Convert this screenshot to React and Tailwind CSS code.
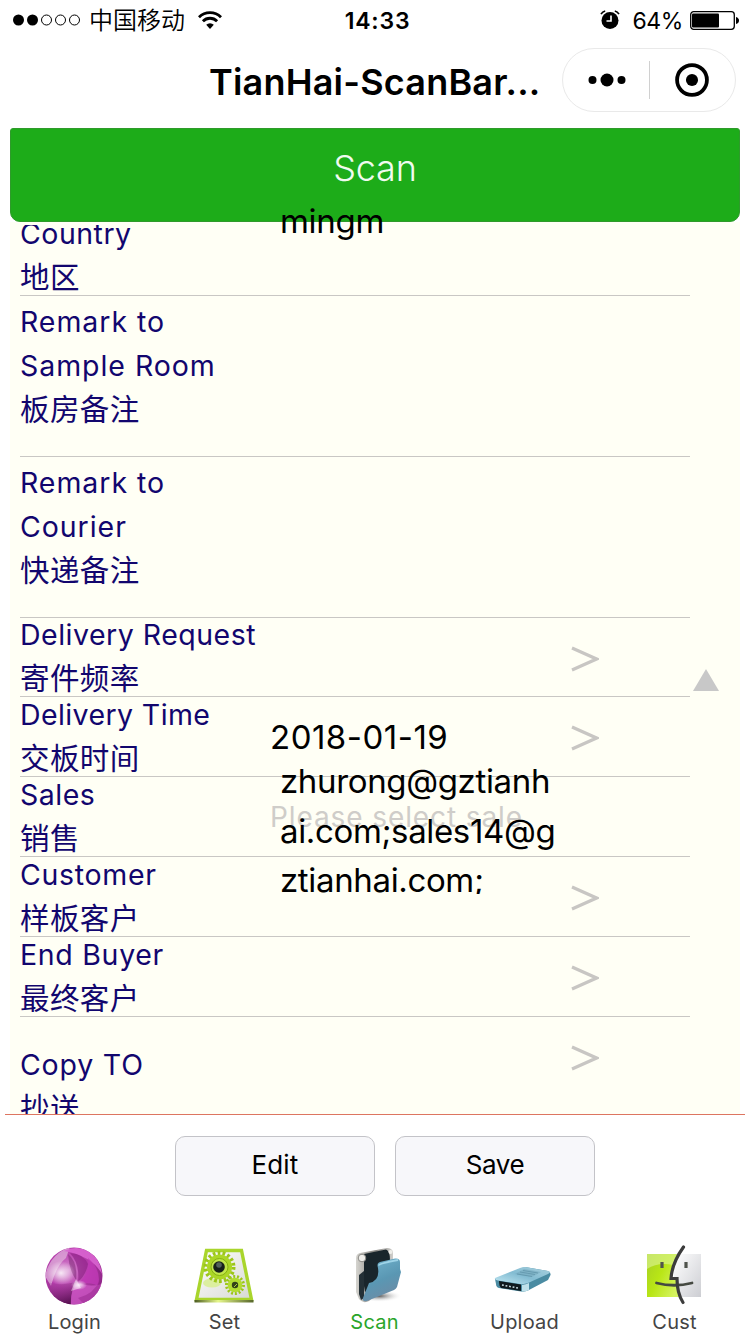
import React, { useState } from "react";

const rows = [
    { lines: ["Country", "地区"], box: "h-20 items-center" },
    { lines: ["Remark to", "Sample Room", "板房备注"], box: "h-[161px] items-start pt-1 tracking-[0.95px]" },
    { lines: ["Remark to", "Courier", "快递备注"], box: "h-[161px] items-start pt-1 tracking-[0.95px]" },
    { lines: ["Delivery Request", "寄件频率"], box: "h-[79px] items-center tracking-[0.5px]", arrow: true },
    { lines: ["Delivery Time", "交板时间"], box: "h-20 items-center tracking-[0.4px]", arrow: true, value: "2018-01-19" },
    { lines: ["Sales", "销售"], box: "h-20 items-center tracking-[0.5px]", placeholder: "Please select sale" },
    { lines: ["Customer", "样板客户"], box: "h-20 items-center tracking-[0.7px]", arrow: true },
    { lines: ["End Buyer", "最终客户"], box: "h-20 items-center tracking-[0.7px]", arrow: true },
    { lines: ["Copy TO", "抄送"], box: "h-[120px] items-start pt-[26px] tracking-[0.8px]", arrow: true },
];

const StatusBar = () => (
    <div className="flex h-10 shrink-0 items-center justify-between pl-[13px] pr-[11px]">
        <div className="flex w-[300px] items-center">
            <svg width="70" height="14" viewBox="0 0 70 14">
                <circle cx="5.5" cy="7" r="5.5" />
                <circle cx="19.5" cy="7" r="5.5" />
                <circle cx="33.5" cy="7" r="5" fill="none" stroke="#000" />
                <circle cx="47.5" cy="7" r="5" fill="none" stroke="#000" />
                <circle cx="61.5" cy="7" r="5" fill="none" stroke="#000" />
            </svg>
            <span className="ml-[6px] mt-[2px] text-[24px] leading-10 font-[350]">中国移动</span>
            <svg className="ml-[13px]" width="24" height="18" viewBox="0 0 24 18" fill="none" stroke="#000" strokeWidth="2.8">
                <path d="M1 6.2a15.6 15.6 0 0 1 22 0" />
                <path d="M4.9 10.2a10 10 0 0 1 14.2 0" />
                <path d="M12 18l-3.8-4.2a5.4 5.4 0 0 1 7.6 0z" fill="#000" stroke="none" />
            </svg>
        </div>
        <span className="mt-[2px] pl-[3px] text-[23px] font-semibold tracking-[0.8px]">14:33</span>
        <div className="flex w-[300px] items-center justify-end">
            <svg width="20" height="20" viewBox="0 0 20 20">
                <circle cx="10" cy="10.5" r="8.5" />
                <path d="M1 4.2Q2.5 1.6 5.2 1M19 4.2Q17.5 1.6 14.8 1" stroke="#000" strokeWidth="1.6" fill="none" />
                <path d="M11 5.5v5.5H6.5" stroke="#fff" strokeWidth="1.6" fill="none" />
            </svg>
            <span className="ml-[12px] mt-[2px] text-[23px] font-[370] tracking-[-0.4px]">64%</span>
            <svg className="ml-[7px]" width="49" height="19" viewBox="0 0 49 19">
                <rect x="0.7" y="0.7" width="43.6" height="17.6" rx="3" fill="none" stroke="#000" strokeWidth="1.3" />
                <rect x="2" y="2.5" width="27" height="14" rx="1" />
                <path d="M46 6q3 1 3 3.5T46 13z" />
            </svg>
        </div>
    </div>
);

const NavBar = () => (
    <div className="flex h-[88px] shrink-0 items-start justify-end pr-[14px]">
        <h1 className="mr-[21px] flex h-[84px] w-[332px] items-center whitespace-nowrap text-[36px] font-semibold tracking-[0.2px]">
            TianHai-ScanBar...
        </h1>
        <div className="mt-2 flex h-16 w-[174px] items-center rounded-full border border-[#e9e9e9]">
            <svg className="ml-[25px]" width="38" height="16" viewBox="0 0 38 16">
                <circle cx="4.5" cy="8" r="4" />
                <circle cx="19" cy="8" r="6.5" />
                <circle cx="33.5" cy="8" r="4" />
            </svg>
            <div className="ml-[23px] h-[38px] w-px bg-[#d0d0d0]"></div>
            <svg className="ml-[25px]" width="34" height="34" viewBox="0 0 36 36">
                <circle cx="18" cy="18" r="15.8" fill="none" stroke="#000" strokeWidth="4" />
                <circle cx="18" cy="18" r="6.4" />
            </svg>
        </div>
    </div>
);

const Row = ({ lines, box, arrow, value, placeholder }) => (
    <div className={`relative flex shrink-0 border-b border-[#c9c7c4] ${box}`}>
        <div className="w-[250px] shrink-0 whitespace-nowrap text-[28.5px] font-[370] leading-[44px] text-[#12066e]">
            {lines.map((line, index) => (
                <div key={index} className={/^[A-Z]/.test(line) ? "h-[44px]" : "h-[44px] text-[29.5px] leading-[43px] tracking-[0.4px]"}>{line}</div>
            ))}
        </div>
        {value && <span className="mt-[2px] text-[33px] tracking-[0.5px] text-black">{value}</span>}
        {placeholder && <span className="text-[28px] font-[370] tracking-[0.9px] text-[#cfcdc9]">{placeholder}</span>}
        {arrow && (
            <svg className="absolute left-[551px] top-[28px]" width="28" height="26" viewBox="0 0 28 26">
                <path d="M1 2L25.5 13L1 24" fill="none" stroke="#c8c6c3" strokeWidth="3.2" />
            </svg>
        )}
    </div>
);

const LoginIcon = () => (
    <svg className="-ml-[2px]" width="60" height="60" viewBox="0 0 60 60">
        <defs>
            <radialGradient id="ball" cx="0.4" cy="0.4" r="0.65">
                <stop offset="0" stopColor="#d78ad0" />
                <stop offset="0.5" stopColor="#b83fae" />
                <stop offset="1" stopColor="#8d2485" />
            </radialGradient>
            <radialGradient id="ballGlow">
                <stop offset="0" stopColor="#fff" stopOpacity="0.85" />
                <stop offset="1" stopColor="#fff" stopOpacity="0" />
            </radialGradient>
            <linearGradient id="ballDark" x1="0.3" y1="0" x2="0.7" y2="1">
                <stop offset="0" stopColor="#a13a98" stopOpacity="0.3" />
                <stop offset="1" stopColor="#4f0c49" />
            </linearGradient>
            <clipPath id="ballClip"><circle cx="30" cy="30" r="28.5" /></clipPath>
        </defs>
        <circle cx="30" cy="30" r="28.5" fill="url(#ball)" />
        <g clipPath="url(#ballClip)">
            <path d="M1 30Q6 8 26 1L22 12Q12 20 7 40z" fill="#dfb0db" opacity="0.75" />
            <path d="M20 5Q32 -1 44 5Q56 12 58 28Q48 10 20 5z" fill="#d964d0" opacity="0.9" />
            <path d="M24 8Q34 16 32 34Q25 24 24 8z" fill="#7d2a76" opacity="0.55" />
            <path d="M26 7Q40 8 44 18Q42 29 34 36Q36 18 26 7z" fill="#8e2386" opacity="0.65" />
            <path d="M44 12Q58 24 54 40Q46 36 34 37Q46 28 44 12z" fill="#c03ab6" opacity="0.8" />
            <path d="M3 36Q16 40 32 36Q26 46 27 60Q8 56 3 36z" fill="url(#ballDark)" />
            <path d="M27 60Q26 44 34 36Q44 42 58 38Q52 58 27 60z" fill="#cc56c3" opacity="0.8" />
            <path d="M34 52Q50 48 56 34Q58 50 40 58z" fill="#93238a" opacity="0.45" />
            <ellipse cx="17" cy="27" rx="14" ry="12" fill="url(#ballGlow)" />
            <path d="M32 33l5 9-10 3z" fill="#fff" opacity="0.45" />
            <ellipse cx="35" cy="39" rx="8" ry="5" fill="url(#ballGlow)" />
        </g>
    </svg>
);

const SetIcon = () => (
    <svg className="-ml-[2px]" width="62" height="60" viewBox="0 0 62 60">
        <defs>
            <linearGradient id="plate" x1="0" y1="0" x2="1" y2="1">
                <stop offset="0" stopColor="#fff" />
                <stop offset="1" stopColor="#d7d9d3" />
            </linearGradient>
            <linearGradient id="plateEdge">
                <stop offset="0" stopColor="#4b5c20" />
                <stop offset="0.4" stopColor="#e6f78b" />
                <stop offset="1" stopColor="#56662a" />
            </linearGradient>
        </defs>
        <path d="M13.5 4.5H48.5L58.5 53.5H3.5z" fill="url(#plate)" stroke="#a9d52c" strokeWidth="3.4" />
        <path d="M1.5 54H60.5V56.5H1.5z" fill="url(#plateEdge)" />
        <ellipse cx="19" cy="37" rx="9" ry="4.5" fill="#dcefa0" />
        <circle cx="26.5" cy="21" r="14" fill="none" stroke="#9cc61b" strokeWidth="4" strokeDasharray="2.7 2.2" />
        <circle cx="26.5" cy="21" r="12.5" fill="#abd726" />
        <circle cx="26.5" cy="21" r="8.5" fill="#c0e64a" stroke="#86b010" />
        <circle cx="26" cy="21" r="5.8" fill="#17211b" />
        <circle cx="26" cy="19" r="2.8" fill="#52615c" />
        <circle cx="42" cy="39" r="8.5" fill="none" stroke="#9cc61b" strokeWidth="3" strokeDasharray="2 1.8" />
        <circle cx="42" cy="39" r="7.3" fill="#b2dc32" />
        <circle cx="42" cy="39" r="3.2" fill="#33401a" />
        <path d="M41 41l3-3" stroke="#a8cf3a" />
    </svg>
);

const ScanIcon = () => (
    <svg width="60" height="60" viewBox="0 0 60 60">
        <defs>
            <linearGradient id="folder" x1="0.3" y1="0" x2="0.7" y2="1">
                <stop offset="0" stopColor="#6fb0ca" />
                <stop offset="0.5" stopColor="#5a97b3" />
                <stop offset="1" stopColor="#6f89a3" />
            </linearGradient>
            <linearGradient id="folderBack">
                <stop offset="0" stopColor="#d6d5d0" />
                <stop offset="0.5" stopColor="#85837f" />
                <stop offset="1" stopColor="#cfcecb" />
            </linearGradient>
            <radialGradient id="folderShade">
                <stop offset="0" stopColor="#555" />
                <stop offset="1" stopColor="#fff" stopOpacity="0" />
            </radialGradient>
        </defs>
        <ellipse cx="34" cy="50" rx="23" ry="6" fill="url(#folderShade)" />
        <path d="M11 12Q11 8 15 7L42 2Q47 2 48 6V32L24 55Q18 58 14 53L11 46z" fill="url(#folderBack)" />
        <path d="M19 8L41 3.5Q45 5 45 14L42 34L20 46L18 34L19 25z" fill="#19252b" />
        <path d="M14 29L19 25V52L16 54L14 48z" fill="#243036" />
        <path d="M33 22Q31 16 37 15.500L50 12.500Q55 12 55 16V23L56 26L52 41Q51 43 49 44L22 55Q17 56 18 52L24 37Q35 35 33 22z" fill="url(#folder)" />
        <path d="M34 19.500Q34 17.500 53 14" fill="none" stroke="#9fd4e8" strokeWidth="2.200" />
        <circle cx="17" cy="12" r="3.800" fill="#efeeea" stroke="#8a8985" />
        <circle cx="45.500" cy="6" r="2" fill="#efeeea" />
    </svg>
);

const UploadIcon = () => (
    <svg className="-ml-[4px]" width="60" height="60" viewBox="0 0 60 60">
        <defs>
            <linearGradient id="drive" x1="0" y1="1" x2="1" y2="0">
                <stop offset="0" stopColor="#c2e8f3" />
                <stop offset="0.5" stopColor="#83bcd2" />
                <stop offset="1" stopColor="#a9d0de" />
            </linearGradient>
        </defs>
        <path d="M2 33L29 22Q32 21 35 21.5L55 25Q58 26 57.5 29L55 34L35 44.5Q32 46 28 45.5L6 42Q3 41 3 38z" fill="#4a8ba2" />
        <path d="M2 32L27 22Q31 20.5 35 21.5L55 25Q59 26 55 28L35 37Q31 38.5 27 38L5 34.5Q1 34 2 32z" fill="url(#drive)" />
        <path d="M22 28L31 23L48 26L39 31z" fill="#72a6b9" opacity="0.5" />
        <path d="M24 28l15 2.500M27 26l15 2.500M30 24.500l15 2.500" stroke="#5f94aa" strokeWidth="0.8" />
        <path d="M6 35L28 38.5V45L8 42Q6 40 6 35z" fill="#101a1f" />
        <path d="M9 39l16 3" stroke="#c9dee4" strokeWidth="1.5" strokeDasharray="1.8 1.8" />
        <path d="M29 39Q33 38.5 36 37V44Q32 46 29 45.5z" fill="#bfe1ea" />
    </svg>
);

const CustIcon = () => (
    <svg className="-ml-[2px]" width="60" height="64" viewBox="0 0 60 64">
        <defs>
            <linearGradient id="faceLeft" x1="0" y1="0" x2="1" y2="0.6">
                <stop offset="0" stopColor="#a5cf22" />
                <stop offset="0.5" stopColor="#b9e616" />
                <stop offset="1" stopColor="#d5f35f" />
            </linearGradient>
            <linearGradient id="faceRight" x1="0" y1="0" x2="1" y2="1">
                <stop offset="0" stopColor="#fff" />
                <stop offset="1" stopColor="#cdced3" />
            </linearGradient>
        </defs>
        <path d="M30 10H57V53H30z" fill="url(#faceRight)" />
        <path d="M3 10H35Q27 22 26 35H33Q33 45 37 53H3z" fill="url(#faceLeft)" />
        <path d="M3 10H35Q31 17 29 21Q14 18 3 25z" fill="#def59a" opacity="0.6" />
        <path d="M18 18v6M42 18v6" stroke="#50544c" strokeWidth="3.2" />
        <path d="M12.5 39Q30 43.5 48 39" fill="none" stroke="#454941" strokeWidth="2.8" strokeLinecap="round" />
        <path d="M39.5 3Q28 19 27 34.5H33Q33 49 39 58.5" fill="none" stroke="#3c3c3c" strokeWidth="3.2" strokeLinecap="round" />
    </svg>
);

const tabs = [
    { name: "Login", icon: <LoginIcon /> },
    { name: "Set", icon: <SetIcon /> },
    { name: "Scan", icon: <ScanIcon /> },
    { name: "Upload", icon: <UploadIcon /> },
    { name: "Cust", icon: <CustIcon /> },
];

const App = () => {
    const [active, setActive] = useState("Scan");

    return (
        <div className="relative flex h-[1334px] w-[750px] flex-col overflow-hidden bg-white font-['Inter','Noto_Sans_CJK_SC',sans-serif] text-black">
            <StatusBar />
            <NavBar />

            <button className="mx-[10px] h-[94px] shrink-0 rounded-b-[10px] rounded-t-[3px] border border-[#2f9a2b] bg-[#1dac19] pb-[15px] text-[36px] font-light tracking-[-0.2px] text-[#f1fbf0]">
                Scan
            </button>

            {/* scrolled form, the first row is partly under the button */}
            <div className="mx-[10px] flex h-[892px] shrink-0 overflow-hidden border-t-[3px] border-[#fffff5] bg-[#fffff5] pl-[10px]">
                <div className="-mt-[9px] flex w-[670px] shrink-0 flex-col tracking-[0.5px]">
                    {rows.map((row, index) => (
                        <Row key={index} {...row} />
                    ))}
                </div>
                <svg className="ml-[3px] mt-[444px]" width="26" height="22" viewBox="0 0 26 22">
                    <path d="M13 0L26 22H0z" fill="#c8c8c8" />
                </svg>
            </div>

            {/* text areas float over the form */}
            <div className="absolute left-[280px] top-[196px] text-[33px] font-[380] leading-[50px] tracking-[-0.3px]">mingm</div>
            <div className="absolute left-[280px] top-[756px] h-[138px] overflow-hidden whitespace-nowrap text-[33px] font-[380] leading-[50px] tracking-[-0.35px]">
                <div>zhurong@gztianh</div>
                <div>ai.com;sales14@g</div>
                <div className="-mt-px">ztianhai.com;</div>
            </div>

            <div className="mx-[5px] h-px shrink-0 bg-[#dd7560]"></div>
            <div className="flex shrink-0 justify-center gap-5 pl-5 pt-[21px]">
                <button className="h-[60px] w-[200px] rounded-[10px] border border-[#c3c3c8] bg-[#f7f7fa] pb-[3px] text-[26px] tracking-[0.2px]">Edit</button>
                <button className="h-[60px] w-[200px] rounded-[10px] border border-[#c3c3c8] bg-[#f7f7fa] pb-[3px] text-[26px] tracking-[-0.4px]">Save</button>
            </div>

            <div className="mt-[48px] grid shrink-0 grid-cols-5">
                {tabs.map((tab) => (
                    <button key={tab.name} onClick={() => setActive(tab.name)} className="flex flex-col items-center">
                        <span className="flex h-[64px] items-center">{tab.icon}</span>
                        <span className={`-ml-px text-[20px] leading-7 tracking-[0.2px] ${active === tab.name ? "text-[#2aa52a]" : "text-[#444]"}`}>{tab.name}</span>
                    </button>
                ))}
            </div>
        </div>
    );
};

export default App;
